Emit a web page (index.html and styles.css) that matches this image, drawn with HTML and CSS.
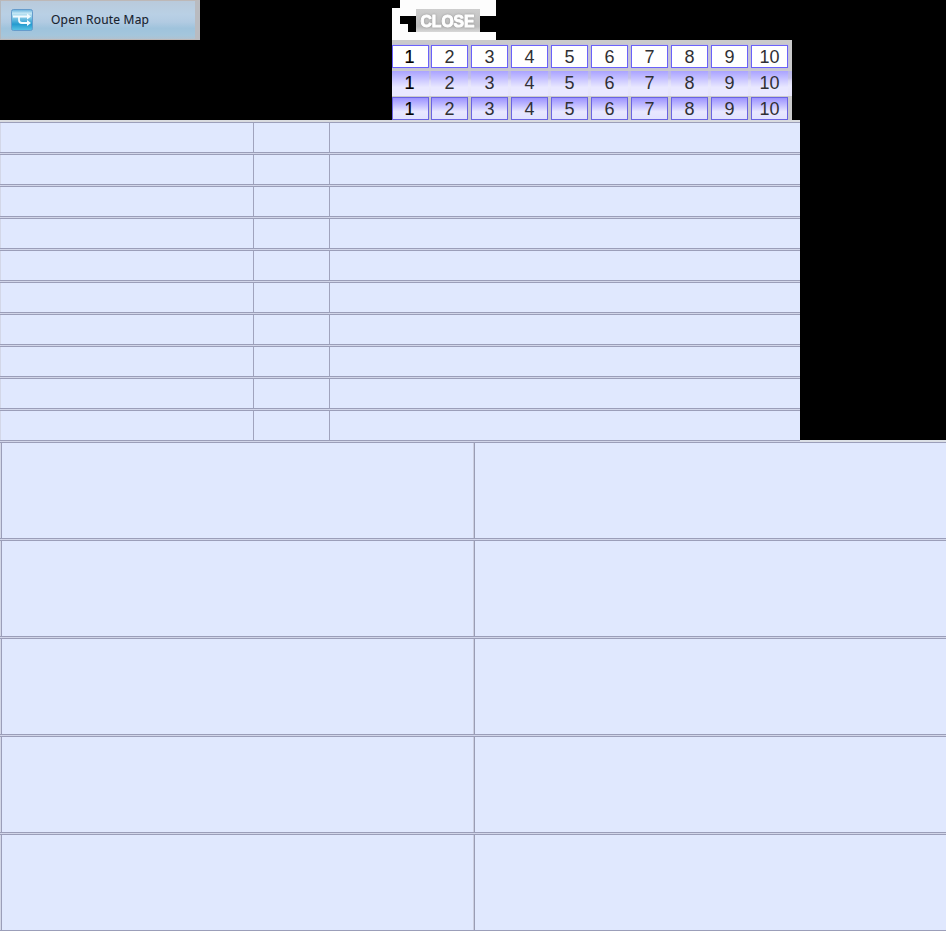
FILE: index.html
```
<!DOCTYPE html>
<html lang="en">
<head>
<meta charset="utf-8">
<title>Route Map</title>
<link rel="stylesheet" href="styles.css">
</head>
<body>
<header class="top">
  <button class="route">
    <svg class="route-icon" width="22" height="22" viewBox="0 0 22 22">
      <defs><linearGradient id="g" x1="0" y1="0" x2="0" y2="1"><stop offset="0" stop-color="#61aedb"/><stop offset=".18" stop-color="#c4e7f5"/><stop offset=".48" stop-color="#64b9df"/><stop offset=".7" stop-color="#249bcf"/><stop offset="1" stop-color="#5bc4e5"/></linearGradient></defs>
      <rect x=".5" y=".5" width="21" height="21" rx="2" fill="url(#g)" stroke="#659bcb"/>
      <path d="M2 7.5H17M8 7.5V11Q8 14 11 14H17" fill="none" stroke="#f2fbff" stroke-width="1.8"/>
      <path d="M16 4.5L20 7.5L16 10.5ZM16 11L20 14L16 17Z" fill="#f2fbff"/>
    </svg>
    <svg class="route-label" width="110" height="22"><text x="0" y="15" textLength="98" lengthAdjust="spacing">Open Route Map</text></svg>
  </button>
  <div class="controls">
    <div class="close-wrap"><button class="close"><svg width="64" height="23"><text x="4.5" y="18" textLength="54" lengthAdjust="spacingAndGlyphs">CLOSE</text></svg></button></div>
    <nav class="pager">
      <div class="pages plain"><b>1</b><span>2</span><span>3</span><span>4</span><span>5</span><span>6</span><span>7</span><span>8</span><span>9</span><span>10</span></div>
      <div class="pages hover"><b>1</b><span>2</span><span>3</span><span>4</span><span>5</span><span>6</span><span>7</span><span>8</span><span>9</span><span>10</span></div>
      <div class="pages active"><b>1</b><span>2</span><span>3</span><span>4</span><span>5</span><span>6</span><span>7</span><span>8</span><span>9</span><span>10</span></div>
    </nav>
  </div>
</header>
<main>
  <section class="list">
    <div class="row"><i></i><i></i><i></i></div><div class="row"><i></i><i></i><i></i></div>
    <div class="row"><i></i><i></i><i></i></div><div class="row"><i></i><i></i><i></i></div>
    <div class="row"><i></i><i></i><i></i></div><div class="row"><i></i><i></i><i></i></div>
    <div class="row"><i></i><i></i><i></i></div><div class="row"><i></i><i></i><i></i></div>
    <div class="row"><i></i><i></i><i></i></div><div class="row"><i></i><i></i><i></i></div>
  </section>
  <section class="panels">
    <div class="panel"><i></i><i></i></div><div class="panel"><i></i><i></i></div>
    <div class="panel"><i></i><i></i></div><div class="panel"><i></i><i></i></div>
    <div class="panel"><i></i><i></i></div>
  </section>
</main>
</body>
</html>
```
FILE: styles.css
```
* { box-sizing: border-box; }
body { margin: 0; background: #000; overflow: hidden; font-family: "Liberation Sans", Arial, sans-serif; }
button { border: 0; padding: 0; margin: 0; font: inherit; }

.top { display: flex; height: 120px; }
.route {
  display: flex; width: 200px; height: 40px; margin-right: 192px; padding: 8px 0 0 10px;
  background: linear-gradient(#b9cadb, #b9d0e5 35%, #b2cbe2 55%, #9fc3dc 72%, #a4c6dc 90%, #afc2d1);
  border: 1px solid #bdb8b7; border-right: 5px solid #b9bbc0; border-left-color: #b4b8bd;
}
.route-icon { flex: none; margin-right: 18px; }
.route-label { flex: none; overflow: visible; }
.route-label text { font: 12px "Noto Sans", sans-serif; fill: #17222e; stroke: #17222e; stroke-width: .1px; }

.controls { width: 400px; }
.close-wrap {
  width: 104px; height: 40px; padding: 9px 24px 8px; background: #fdfdfd;
  clip-path: polygon(8px 0, 104px 0, 104px 16px, 88px 16px, 88px 32px, 104px 32px, 104px 40px, 0 40px, 0 8px, 0 16px, 8px 16px, 8px 24px, 16px 24px, 16px 32px, 24px 32px, 24px 16px, 8px 16px, 0 16px, 0 8px, 8px 8px);
}
.close { display: block; width: 64px; height: 23px; background: linear-gradient(#cecece, #bcbcbc 75%, #d8d8d8); }
.close svg { display: block; }
.close text { font: bold 17px "Liberation Sans", Arial, sans-serif; fill: #fff; stroke: #fff; stroke-width: 1px; stroke-linejoin: round; filter: drop-shadow(0 0 1px #999); }

.pager { width: 400px; height: 80px; padding-top: 5px; background: #cacacb; overflow: hidden; }
.pages { display: flex; height: 23px; margin-bottom: 3px; }
.pages > * {
  width: 37px; height: 23px; margin-right: 3px; border: 1px solid #6a61fa;
  font-size: 18px; line-height: 22px; text-align: center; color: #303034;
}
.pages > b { margin-right: 2px; padding-right: 2px; font-weight: 400; color: #000; -webkit-text-stroke: .2px #000; }
.plain > * { background: #fff; box-shadow: 0 0 2px #b7b3ed; }
.hover { background: linear-gradient(#b8b5e8, #c4c1e8 28%, #dcdaf3 40%, #e9e8fc 60%, #e6e4fa); height: 25px; margin: 0 0 1px; }
.hover > * { height: 25px; line-height: 23px; border-color: transparent; background: linear-gradient(#aaa3ff, #c6c2ff 30%, #e9e8ff 65%) border-box; }
.active > * { background: linear-gradient(#9c93ff, #c3beff 35%, #e8e7ff 65%, #e1e2ff); border-color: #6a63e2; }

.list { width: 800px; background: #e0e8fe; }
.row {
  display: grid; grid-template-columns: 253px 76px 1fr; height: 32px; padding-top: 3px;
  background: linear-gradient(#9b9eb9 0 1px, #d2d6ea 1px 2px, #9b9eb9 2px 3px, transparent 3px);
}
.row:first-child { background: linear-gradient(#d9dbdf 0 2px, #9b9eb9 2px 3px, transparent 3px); }
.row > i + i { border-left: 1px solid #a0a3bd; }
.row > i:first-child, .panel > i:first-child { border-left: 1px solid #d3d7e8; }

.panels { height: 491px; background: #e0e8fe; border-bottom: 1px solid #9b9eb9; }
.panel {
  display: grid; grid-template-columns: 473px 1fr; height: 98px; padding-top: 3px;
  background: linear-gradient(#9b9eb9 0 1px, #d2d6ea 1px 2px, #9b9eb9 2px 3px, transparent 3px);
}
.panel:first-child { background: linear-gradient(90deg, transparent 800px, #dce0e6 800px) 0 0 / 100% 2px no-repeat, linear-gradient(#9b9eb9 0 1px, #d2d6ea 1px 2px, #9b9eb9 2px 3px, transparent 3px); }
.panel > i:first-child { box-shadow: inset 1px 0 #9b9eb9; }
.panel > i + i { border-left: 1px solid #cbcee0; box-shadow: inset 1px 0 #999cb4; }
```
